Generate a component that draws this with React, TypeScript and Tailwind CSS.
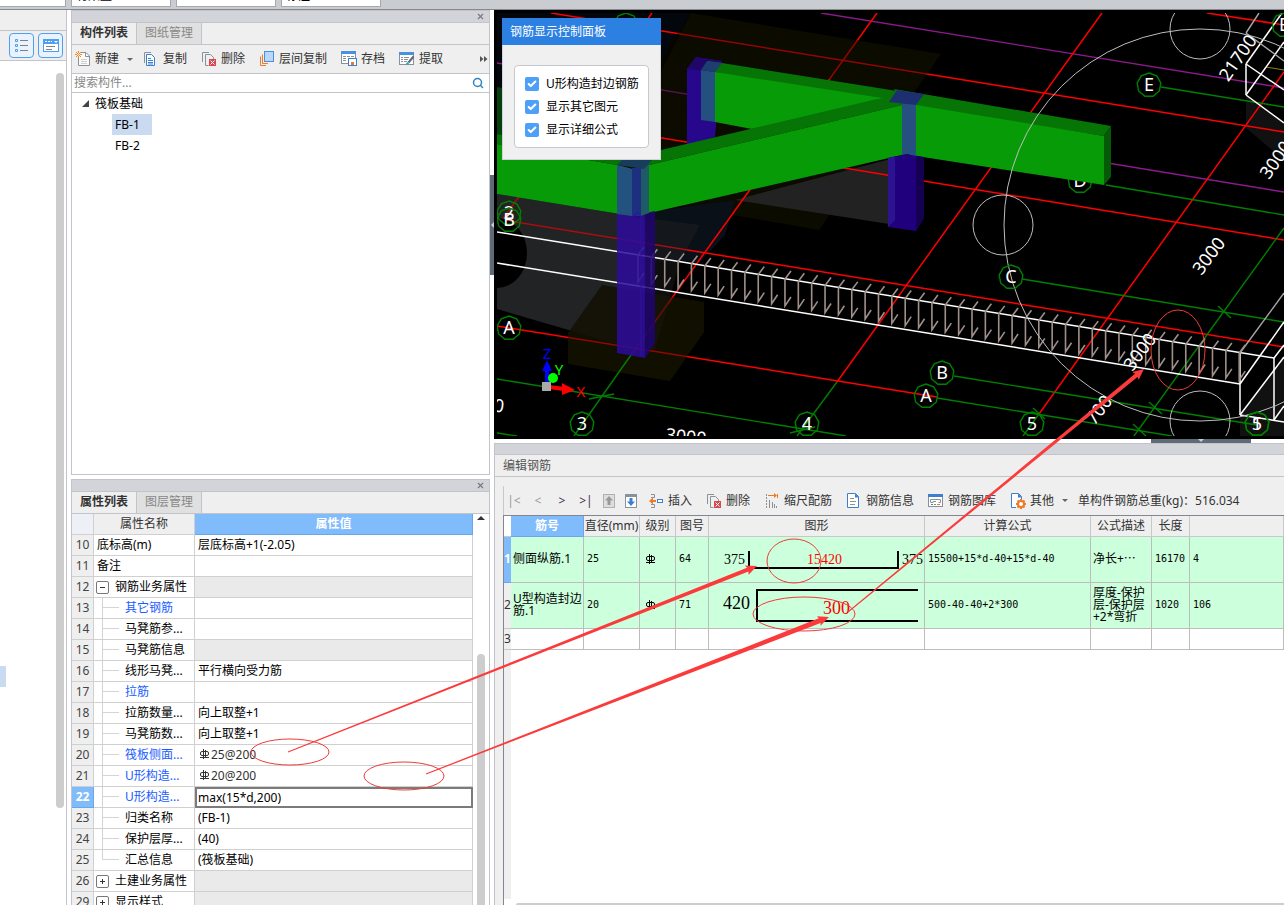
import { useState } from "react"
import type { ReactNode } from "react"
import { Check, Search, X } from "lucide-react"

type Point = [number, number]
type Segment = [number, number, number, number]

// ---------- icons ----------

const Icon = ({ children }: { children: ReactNode }) => (
  <svg width="16" height="16" viewBox="0 0 16 16" fill="none" className="shrink-0" aria-hidden="true">
    {children}
  </svg>
)

const NewIcon = () => (
  <Icon>
    <path d="M5.5 1.5H11l3.5 3.5v9.5h-11V7" fill="#fafafa" stroke="#8a9299" />
    <path d="M10.5 1.5v4h4" stroke="#8a9299" />
    <path d="M6 8.5h6M6 10.5h6M6 12.5h6" stroke="#cfcfcf" />
    <path d="M1 1l5 5M6 1L1 6M3.5 0v2M3.5 5v2M0 3.5h2M5 3.5h2" stroke="#f08a1d" />
  </Icon>
)

const CopyIcon = () => (
  <Icon>
    <path d="M1.5 12V1.5H8" stroke="#8a9299" />
    <path d="M3.5 3.5h5l3 3v8h-8z" fill="#fff" stroke="#3b7fd0" />
    <path d="M5 7.5h3M5 9.5h5M5 11.5h5M5 13h5" stroke="#3b7fd0" />
  </Icon>
)

const DeleteIcon = () => (
  <Icon>
    <path d="M1.5 11V1.5H8" stroke="#8a9299" />
    <path d="M7.5 14.5h-3v-11h5l3 3V8" stroke="#8a9299" />
    <rect x="8" y="8" width="7" height="7" fill="#d9484f" />
    <path d="M9.5 9.5l4 4M13.5 9.5l-4 4" stroke="#fff" />
  </Icon>
)

const LayerIcon = () => (
  <Icon>
    <path d="M1.5 5.5v9H7" stroke="#ee7a28" />
    <path d="M3.5 3.5v9H9" stroke="#ee7a28" />
    <rect x="5.5" y="0.5" width="9" height="10" fill="#b9d7fb" stroke="#4a8fe0" />
  </Icon>
)

const SaveIcon = () => (
  <Icon>
    <rect x="0.5" y="0.5" width="14" height="12" fill="#fff" stroke="#8a9299" />
    <rect x="0" y="0" width="15" height="3" fill="#4a8fe0" />
    <path d="M2 5.5h3M6 5.5h3M10 5.5h3M2 7.5h3M2 9.5h3" stroke="#8a9299" />
    <rect x="7.5" y="7.5" width="8" height="7" fill="#fff" stroke="#3b7fd0" />
    <rect x="10" y="11" width="3" height="3" fill="#ee7a28" />
  </Icon>
)

const ExtractIcon = () => (
  <Icon>
    <rect x="0.5" y="2.5" width="14" height="11" fill="#fff" stroke="#8a9299" />
    <rect x="0" y="1" width="15" height="3" fill="#4a8fe0" />
    <path d="M2 6.5h2M5 6.5h5M2 8.5h2M5 8.5h4M2 10.5h2M5 10.5h3" stroke="#8a9299" />
    <path d="M9.5 11.5l5-6" stroke="#666" strokeWidth="2" />
    <path d="M7.5 13.5l2-2" stroke="#19b6c9" strokeWidth="2" />
  </Icon>
)

const ArrowBoxIcon = ({ up }: { up?: boolean }) => (
  <Icon>
    <rect x="2.5" y="1.5" width="11" height="13" fill={up ? "#dedede" : "#fff"} stroke={up ? "#b0b0b0" : "#8a9299"} />
    {up ? (
      <path d="M8 3l4 4.5H9.5V12h-3V7.5H4z" fill="#999" />
    ) : (
      <>
        <rect x="2" y="1" width="12" height="3" fill="#8a9299" />
        <path d="M8 13l4-4.5H9.5V5h-3v3.5H4z" fill="#3b7fd0" />
      </>
    )}
  </Icon>
)

const InsertIcon = () => (
  <Icon>
    <path d="M3 1.5h3.500v3H3M3 11.5h3.500v3H3" stroke="#8a9299" />
    <path d="M1 8l4-3.500v2.500h3v2H5v2.500z" fill="#ee7a28" />
    <rect x="9.5" y="6.5" width="5" height="3" fill="#fff" stroke="#3b7fd0" />
  </Icon>
)

const ScaleIcon = () => (
  <Icon>
    <path d="M2.5 1v14" stroke="#8a9299" strokeDasharray="2 1" />
    <path d="M5.5 7v8M8.5 9v6M10.5 11v4M12.5 13v2" stroke="#8a9299" />
    <path d="M4 2.5h7M13.5 1v4" stroke="#ee7a28" />
    <path d="M10 0l3 2.5L10 5z" fill="#ee7a28" />
  </Icon>
)

const InfoIcon = () => (
  <Icon>
    <path d="M1.5 0.5h8l3 3v11h-11z" fill="#fff" stroke="#3b7fd0" />
    <path d="M9 0.5v4h4z" fill="#3b7fd0" />
    <path d="M4 5.5h4M4 8.5h6M4 11.5h5" stroke="#8a9299" />
  </Icon>
)

const LibraryIcon = () => (
  <Icon>
    <rect x="0.5" y="1.5" width="14" height="12" fill="#fff" stroke="#8a9299" />
    <rect x="0" y="1" width="15" height="3" fill="#3b7fd0" />
    <path d="M2.5 9.500v-3h10v3h-2M3 9.500h2v-1h3" stroke="#8a9299" />
    <path d="M3 11.5h2" stroke="#3b7fd0" />
    <path d="M6 11.5h2" stroke="#56b24b" />
    <path d="M9 11.5h3" stroke="#ee7a28" />
  </Icon>
)

const OtherIcon = () => (
  <Icon>
    <path d="M6 14.5H1.5V0.5h7l3 3V6" fill="#fff" stroke="#3b7fd0" />
    <path d="M8 0.5v4h4z" fill="#3b7fd0" />
    <circle cx="11" cy="11" r="3" fill="#fff" stroke="#ee7a28" strokeWidth="2" />
    <path d="M11 6v2M11 14v2M6 11h2M14 11h2M7.500 7.500l1 1M13.500 13.500l1 1M14.500 7.500l-1 1M8.500 13.500l-1 1" stroke="#ee7a28" strokeWidth="2" />
  </Icon>
)

const Caret = () => (
  <span className="-mr-1 ml-1 block h-0 w-0 border-x-[3px] border-t-[3px] border-x-transparent border-t-[#666]" />
)

// steel grade mark
const RebarMark = () => (
  <svg width="11" height="11" viewBox="0 0 11 11" fill="none" stroke="currentColor" className="block shrink-0" role="img" aria-label="HRB400">
    <rect x="1.5" y="2.5" width="8" height="4" rx="1.500" />
    <path d="M4.5 0v10M6.5 1v7M1 8.5h9" />
  </svg>
)

// ---------- shared parts ----------

const TitleStrip = () => (
  <div className="flex h-3 shrink-0 items-center justify-end border-b border-[#c3c4c9] bg-[#d3d4da] pr-1">
    <button type="button" aria-label="关闭">
      <X size={9} strokeWidth={3} color="#777" />
    </button>
  </div>
)

const Tabs = ({ names }: { names: string[] }) => (
  <div className="flex h-[22px] shrink-0 border-b border-[#c3c4c9] bg-[#efefef]" role="tablist">
    {names.map((name, i) => (
      <button
        key={name}
        type="button"
        role="tab"
        aria-selected={i === 0}
        className={
          i === 0
            ? "border-r border-[#c3c4c9] px-2 pb-px font-bold text-[#333]"
            : "border-r border-[#c3c4c9] bg-[#e0e0e0] px-2 pb-px text-[#888]"
        }
      >
        {name}
      </button>
    ))}
  </div>
)

const ToolButton = ({ icon, label, caret }: { icon: ReactNode; label: string; caret?: boolean }) => (
  <button type="button" className="flex shrink-0 items-center gap-1 whitespace-nowrap text-[#333]">
    {icon}
    {label}
    {caret && <Caret />}
  </button>
)

// ---------- left side ----------

const Rail = () => (
  <aside className="flex w-[67px] shrink-0 flex-col border-r border-[#c3c4c9]">
    <div className="h-[21px] border-b border-[#c3c4c9] bg-[#efefef]" />
    <div className="flex h-[30px] shrink-0 items-center justify-end gap-1 border-b border-[#c3c4c9] bg-[#efefef] pr-[3px]">
      <button type="button" aria-label="列表" className="flex h-[25px] w-[25px] items-center justify-center rounded border border-[#4d9ff0] bg-[#eaf3fd]">
        <Icon>
          <path d="M1.5 1.5h2v2h-2zM1.5 6.5h2v2h-2zM1.5 11.5h2v2h-2z" stroke="#4d9ff0" />
          <path d="M6 2.5h8M6 7.5h8M6 12.5h8" stroke="#7a8288" />
        </Icon>
      </button>
      <button type="button" aria-label="面板" className="flex h-[25px] w-[25px] items-center justify-center rounded border border-[#4d9ff0] bg-[#eaf3fd]">
        <Icon>
          <rect x="0.5" y="1.5" width="15" height="12" fill="#fff" stroke="#4d9ff0" />
          <rect x="0" y="1" width="16" height="5" fill="#4d9ff0" />
          <path d="M2 3.5h2M5 3.5h2M8 3.5h1" stroke="#fff" />
          <path d="M11 3h4l-2 2z" fill="#fff" />
          <path d="M3 8.5h9M3 11.5h6" stroke="#7a8288" />
        </Icon>
      </button>
    </div>
    <div className="flex flex-1 justify-between pt-3 pr-[2px]">
      <div className="flex flex-col">
        <div className="flex-[593_1_0]" />
        <div className="h-[21px] w-[6px] bg-[#c9daf1]" />
        <div className="flex-[218_1_0]" />
      </div>
      <div className="flex flex-col">
        <div className="w-2 flex-[735_1_0] rounded-full bg-[#cdcdcd]" />
        <div className="flex-[97_1_0]" />
      </div>
    </div>
  </aside>
)

const ComponentPanel = () => {
  const [selected, setSelected] = useState("FB-1")

  return (
    <section className="flex min-h-0 flex-[465_1_0] flex-col border border-[#c3c4c9] bg-white">
      <TitleStrip />
      <Tabs names={["构件列表", "图纸管理"]} />
      <div className="flex h-[29px] shrink-0 items-center gap-[14px] overflow-hidden border-b border-[#c3c4c9] bg-[#efefef] pl-[3px]">
        <ToolButton icon={<NewIcon />} label="新建" caret />
        <ToolButton icon={<CopyIcon />} label="复制" />
        <ToolButton icon={<DeleteIcon />} label="删除" />
        <ToolButton icon={<LayerIcon />} label="层间复制" />
        <ToolButton icon={<SaveIcon />} label="存档" />
        <ToolButton icon={<ExtractIcon />} label="提取" />
        <button type="button" aria-label="更多" className="mr-px ml-auto">
          <svg width="8" height="6" viewBox="0 0 8 6" fill="#555">
            <path d="M0 0l3.500 3L0 6zM4 0l3.500 3L4 6z" />
          </svg>
        </button>
      </div>
      <div className="flex h-[19px] shrink-0 items-center border-b border-[#c3c4c9] pr-[5px]">
        <input
          type="text"
          aria-label="搜索构件"
          placeholder="搜索构件..."
          className="min-w-0 flex-1 pl-[2px] outline-none placeholder:text-[#888]"
        />
        <Search size={12} strokeWidth={3} color="#2a86bd" />
      </div>
      <ul className="leading-[21px] text-black">
        <li>
          <span className="flex items-center gap-[6px] pl-[10px]">
            <svg width="7" height="7" viewBox="0 0 7 7" fill="#444">
              <path d="M7 0v7H0z" />
            </svg>
            筏板基础
          </span>
          <ul className="flex flex-col items-start pl-10">
            {["FB-1", "FB-2"].map((name) => (
              <li key={name}>
                <button
                  type="button"
                  onClick={() => setSelected(name)}
                  className={selected === name ? "w-10 bg-[#c9daf1] pl-[3px] text-left" : "w-10 pl-[3px] text-left"}
                >
                  {name}
                </button>
              </li>
            ))}
          </ul>
        </li>
      </ul>
    </section>
  )
}

type Prop = {
  no: number
  name: string
  value?: string
  child?: "mid" | "last"
  toggle?: "+" | "-"
  blue?: boolean
  grey?: boolean
  mark?: boolean
  active?: boolean
}

const props: Prop[] = [
  { no: 10, name: "底标高(m)", value: "层底标高+1(-2.05)" },
  { no: 11, name: "备注" },
  { no: 12, name: "钢筋业务属性", toggle: "-", grey: true },
  { no: 13, name: "其它钢筋", child: "mid", blue: true },
  { no: 14, name: "马凳筋参...", child: "mid" },
  { no: 15, name: "马凳筋信息", child: "mid", grey: true },
  { no: 16, name: "线形马凳...", value: "平行横向受力筋", child: "mid" },
  { no: 17, name: "拉筋", child: "mid", blue: true },
  { no: 18, name: "拉筋数量...", value: "向上取整+1", child: "mid" },
  { no: 19, name: "马凳筋数...", value: "向上取整+1", child: "mid" },
  { no: 20, name: "筏板侧面...", value: "25@200", child: "mid", blue: true, mark: true },
  { no: 21, name: "U形构造...", value: "20@200", child: "mid", blue: true, mark: true },
  { no: 22, name: "U形构造...", value: "max(15*d,200)", child: "mid", blue: true, active: true },
  { no: 23, name: "归类名称", value: "(FB-1)", child: "mid" },
  { no: 24, name: "保护层厚...", value: "(40)", child: "mid" },
  { no: 25, name: "汇总信息", value: "(筏板基础)", child: "last" },
  { no: 26, name: "土建业务属性", toggle: "+", grey: true },
  { no: 29, name: "显示样式", toggle: "+", grey: true },
]

const PropertyName = ({ row }: { row: Prop }) => (
  <div className="flex h-5 items-center overflow-hidden whitespace-nowrap">
    {row.child && (
      <span className={row.child === "mid" ? "mr-[6px] ml-2 h-5 w-[17px] border-l border-[#d4d4d4]" : "mr-[6px] ml-2 h-5 w-[17px]"}>
        <span className={row.child === "mid" ? "block h-[10px] border-b border-[#d4d4d4]" : "block h-[10px] border-b border-l border-[#d4d4d4]"} />
      </span>
    )}
    {row.toggle && (
      <button
        type="button"
        aria-label={row.toggle === "+" ? "展开" : "折叠"}
        className="mr-[6px] ml-[2px] flex h-[13px] w-[13px] items-center justify-center rounded-[2px] border border-[#777]"
      >
        <svg width="5" height="5" viewBox="0 0 5 5" stroke="#333">
          <path d={row.toggle === "+" ? "M0 2.5h5M2.5 0v5" : "M0 2.5h5"} />
        </svg>
      </button>
    )}
    <span className={row.blue ? "text-[#1a5cff]" : "text-black"}>
      {!row.child && !row.toggle ? <span className="pl-[3px]">{row.name}</span> : row.name}
    </span>
  </div>
)

const PropertyPanel = () => (
  <section className="flex min-h-0 flex-[426_1_0] flex-col overflow-hidden border border-b-0 border-[#c3c4c9] bg-white">
    <TitleStrip />
    <Tabs names={["属性列表", "图层管理"]} />
    <div className="flex min-h-0 flex-1">
      <div className="min-w-0 flex-1 overflow-hidden">
        <table className="w-full table-fixed border-separate border-spacing-0">
          <colgroup>
            <col className="w-[22px]" />
            <col className="w-[101px]" />
            <col />
          </colgroup>
          <thead>
            <tr className="h-[21px] bg-[#efefef] text-[#333]">
              <th className="border-r border-b border-[#d0d0d0] bg-[#edf1f7] p-0" aria-label="序号" />
              <th className="border-r border-b border-[#d0d0d0] p-0 font-normal">属性名称</th>
              <th className="border-r border-b border-[#69a7ec] bg-[#80bbfb] p-0 font-bold text-white">属性值</th>
            </tr>
          </thead>
          <tbody>
            {props.map((row) => (
              <tr key={row.no} className="h-[21px]">
                <td
                  className={
                    row.active
                      ? "border-r border-b border-[#69a7ec] bg-[#80bbfb] p-0 text-center font-bold text-white"
                      : "border-r border-b border-[#d0d0d0] bg-[#efefef] p-0 text-center text-[#444]"
                  }
                >
                  {row.no}
                </td>
                <td className="border-r border-b border-[#d0d0d0] p-0">
                  <PropertyName row={row} />
                </td>
                {row.active ? (
                  <td className="p-0">
                    <input
                      type="text"
                      aria-label={row.name}
                      defaultValue={row.value}
                      className="block h-[21px] w-full border-2 border-[#7b7b7b] pb-px pl-px text-black outline-none"
                    />
                  </td>
                ) : (
                  <td
                    className={
                      row.grey
                        ? "border-r border-b border-[#d0d0d0] bg-[#eaeaea] p-0"
                        : "border-r border-b border-[#d0d0d0] p-0 pl-[3px] text-black"
                    }
                  >
                    {row.mark ? (
                      <span className="flex items-center gap-px pb-px pl-px text-[#333]">
                        <RebarMark />
                        {row.value}
                      </span>
                    ) : (
                      row.value
                    )}
                  </td>
                )}
              </tr>
            ))}
          </tbody>
        </table>
      </div>
      <div className="flex w-4 flex-col items-center pt-[2px]">
        <span className="h-0 w-0 border-x-4 border-b-4 border-x-transparent border-b-[#333]" />
        <div className="flex-[134_1_0]" />
        <div className="w-2 flex-[252_1_0] rounded-t-full bg-[#cdcdcd]" />
      </div>
    </div>
  </section>
)

// ---------- 3D view ----------

const redLines: Segment[] = [
  [551, 13, 1284, 132],
  [497, 111, 1284, 240],
  [497, 219, 1284, 347],
  [497, 326, 937, 397],
  [1207, 13, 1284, 25],
  [652, 13, 497, 227],
  [877, 13, 631, 355],
  [1102, 13, 837, 382],
  [1284, 72, 1039, 414],
]

const greenLines: Segment[] = [
  [1161, 87, 1284, 107],
  [1106, 185, 1284, 215],
  [1022, 279, 1284, 322],
  [954, 376, 1257, 425],
  [937, 398, 1172, 436],
  [497, 379, 846, 436],
  [497, 433, 517, 436],
  [631, 355, 574, 436],
  [837, 382, 797, 436],
  [1284, 228, 1134, 436],
  [1039, 414, 1023, 436],
  [589, 399, 614, 394],
  [790, 433, 815, 427],
  [1218, 306, 1231, 318],
  [1149, 402, 1162, 414],
  [1133, 424, 1146, 436],
  [1033, 408, 1045, 419],
]

const magentaLines: Segment[] = [
  [821, 13, 1284, 88],
  [497, 63, 1284, 192],
]

const whiteLines: Segment[] = [
  [497, 232, 1274, 358],
  [497, 263, 1240, 384],
  [1246, 64, 1284, 90],
  [1246, 95, 1284, 123],
  [1246, 64, 1246, 95],
  [1246, 64, 1282, 13],
  [1246, 95, 1284, 42],
  [1240, 353, 1240, 415],
  [1240, 415, 1284, 422],
  [1274, 358, 1274, 420],
  [1274, 358, 1284, 345],
  [1240, 384, 1284, 322],
  [1240, 415, 1284, 357],
  [1274, 420, 1284, 406],
]

const greyLines: Segment[] = [
  [1259, 13, 1246, 33],
  [1246, 33, 1284, 61],
  [1240, 353, 1284, 293],
]

const bubbles: { x: number; y: number; text: string }[] = [
  { x: 626, y: 25, text: "" },
  { x: 1149, y: 85, text: "E" },
  { x: 1284, y: 25, text: "E" },
  { x: 1011, y: 277, text: "C" },
  { x: 942, y: 373, text: "B" },
  { x: 926, y: 396, text: "A" },
  { x: 1032, y: 424, text: "5" },
  { x: 807, y: 424, text: "4" },
  { x: 582, y: 424, text: "3" },
  { x: 509, y: 328, text: "A" },
  { x: 509, y: 213, text: "2" },
  { x: 509, y: 220, text: "B" },
  { x: 1257, y: 424, text: "1" },
  { x: 1257, y: 424, text: "5" },
]

const dimensions = [
  { x: 1238, y: 58, text: "21700", angle: -55 },
  { x: 1276, y: 160, text: "3000", angle: -55 },
  { x: 1209, y: 256, text: "3000", angle: -53 },
  { x: 1140, y: 352, text: "3000", angle: -53 },
  { x: 1099, y: 410, text: "700", angle: -53 },
  { x: 686, y: 437, text: "3000", angle: 6 },
  { x: 499, y: 406, text: "0", angle: 8 },
]

const Lines = ({ items, color, width = 1 }: { items: Segment[]; color: string; width?: number }) => (
  <g stroke={color} strokeWidth={width}>
    {items.map(([x1, y1, x2, y2], i) => (
      <line key={i} x1={x1} y1={y1} x2={x2} y2={y2} />
    ))}
  </g>
)

const Bubble = ({ x, y, text }: { x: number; y: number; text: string }) => {
  const ring = Array.from({ length: 9 }, (_, i) => {
    const a = (i * 2 * Math.PI) / 9 - Math.PI / 2
    return `${x + 12 * Math.cos(a)},${y + 12 * Math.sin(a)}`
  }).join(" ")

  return (
    <g>
      <polygon points={ring} fill="none" stroke="#008000" strokeWidth="1.4" />
      <text x={x} y={y + 6} fill="#fff" fontSize="18" textAnchor="middle">
        {text}
      </text>
    </g>
  )
}

const stirrups = Array.from({ length: 46 }, (_, i) => ({ x: 638 + i * 13.36, y: 255 + i * 2.18 }))

const Scene = () => (
  <svg viewBox="494 10 790 429" preserveAspectRatio="xMinYMin slice" className="h-full w-full" role="img" aria-label="三维视图">
    <defs>
      <clipPath id="viewport">
        <rect x="497" y="13" width="787" height="423" />
      </clipPath>
    </defs>
    <rect x="494" y="10" width="790" height="429" fill="#000" />
    <g clipPath="url(#viewport)" fontFamily="'Noto Sans', 'Noto Sans CJK SC', sans-serif">
      <polygon points="497,13 691,13 560,215 725,225 700,262 640,262 497,240" fill="#03060c" />
      <polygon points="691,13 941,54 819,230 600,192" fill="#0c0b00" />
      <polygon points="497,194 632,216 655,225 655,350 620,345 497,309" fill="#222325" />
      <polygon points="640,213 735,200 725,235 700,262 655,258" fill="#0a1017" />
      <polygon points="735,200 894,158 889,224" fill="#222" />
      <polygon points="602,285 704,302 704,332 670,381 568,364 568,333" fill="#111000" />
      <polygon points="1246,95 1284,123 1284,160 1246,128" fill="#111" />
      <polygon points="1240,415 1284,357 1284,436 1240,436" fill="#111" />

      <Lines items={magentaLines} color="#8d1a8d" width={1.4} />
      <Lines items={redLines} color="#ff0000" width={1.5} />
      <polygon points="691,13 941,54 914,92 722,63 661,137 597,150" fill="#0c0b00" opacity="0.45" />
      <polygon points="497,194 632,216 700,225 680,262 655,350 620,345 497,309" fill="#222325" opacity="0.4" />
      <polygon points="602,285 704,302 704,332 670,381 568,364 568,333" fill="#111000" opacity="0.45" />
      <Lines items={greenLines} color="#008000" width={1.4} />
      <Lines items={[[1266, 67, 1284, 70]]} color="#8a8412" />
      <Bubble x={1080} y={181} text="D" />

      {/* bars along the slab edge */}
      <ellipse cx="497" cy="253" rx="30" ry="35" fill="#000" />
      <Lines items={whiteLines} color="#fff" width={1.5} />
      <Lines items={greyLines} color="#a8a8a8" width={1.4} />
      <g fill="none" stroke="#a0908a" strokeWidth="1.6">
        {stirrups.map(({ x, y }) => (
          <path key={x} d={`M${x + 6} ${y - 8}L${x} ${y}V${y + 27}L${x + 6} ${y + 18}`} />
        ))}
      </g>

      {/* rear column */}
      <polygon points="687,69 696,57 722,61 715,137 687,146" fill="#27088c" />
      <polygon points="687,69 696,57 722,61 715,72" fill="#200668" />

      {/* beams */}
      <polygon points="707,61 722,63 897,91 902,105 870,105 715,72" fill="#067506" />
      <polygon points="715,72 882,98 860,106 752,129 715,122" fill="#089b08" />
      <polygon points="701,70 715,72 715,122 701,120" fill="#23507f" />
      <polygon points="707,61 722,63 715,72 701,70" fill="#1d3f70" />
      <polygon points="894,89 1111,126 1104,136 902,105" fill="#067506" />
      <polygon points="910,104 1104,136 1104,185 910,155" fill="#089b08" />
      <polygon points="1111,126 1111,177 1104,185 1104,136" fill="#055a05" />
      <polygon points="497,87 600,105 600,150 497,134" fill="#07400f" />
      <polygon points="497,134 597,150 661,150 877,99 902,105 649,165 617,165 497,144" fill="#067506" />
      <polygon points="497,144 617,165 632,169 632,216 497,194" fill="#089b08" />
      <polygon points="645,166 902,105 902,155 645,214" fill="#089b08" />

      {/* middle column */}
      <polygon points="888,158 907,154 924,157 924,218 916,231 888,227" fill="#20007c" />
      <polygon points="888,158 895,156 895,220 888,227" fill="#2c1490" />
      <polygon points="916,157 924,157 924,218 916,231" fill="#160052" />
      <polygon points="902,103 916,105 916,156 907,154 902,155" fill="#255080" />
      <polygon points="889,102 897,90 924,94 916,105" fill="#1d2f70" />

      {/* front column */}
      <polygon points="617,213 636,211 645,214 645,358 617,353" fill="#2d0c9c" opacity="0.85" />
      <polygon points="645,213 655,211 655,343 645,358" fill="#1e0570" opacity="0.85" />
      <polygon points="617,165 632,169 632,216 617,214" fill="#24527f" />
      <polygon points="632,168 641,168 641,216 632,216" fill="#1c2f80" />
      <polygon points="641,168 649,165 649,213 641,216" fill="#1f5a66" />
      <polygon points="617,165 622,160 652,160 644,169" fill="#183c5c" />
      <path d="M633 218l4-6 4 4v140" fill="none" stroke="#2f10a0" />

      <g fill="none" stroke="#bdbdbd" strokeWidth="1">
        <circle cx="1200" cy="225" r="196" />
        <circle cx="1003" cy="225" r="30" />
        <circle cx="1200" cy="29" r="30" />
        <circle cx="1200" cy="421" r="30" />
      </g>

      {bubbles.map((b, i) => (
        <Bubble key={i} {...b} />
      ))}
      {dimensions.map((d, i) => (
        <text key={i} x={d.x} y={d.y + 6} fill="#fff" fontSize="18" textAnchor="middle" transform={`rotate(${d.angle} ${d.x} ${d.y})`}>
          {d.text}
        </text>
      ))}

      {/* axes */}
      <path d="M547 384v-16" stroke="#00f" strokeWidth="4" />
      <polygon points="542,371 547,360 552,371" fill="#00f" />
      <circle cx="553" cy="378" r="5" fill="#0f0" />
      <path d="M549 387l15 2" stroke="#f00" strokeWidth="4" />
      <polygon points="562,383 575,390 562,395" fill="#f00" />
      <rect x="542" y="382" width="9" height="9" fill="#aaa" />
      <g fontSize="15" textAnchor="middle">
        <text x="547" y="359" fill="#00f">Z</text>
        <text x="559" y="375" fill="#0f0">Y</text>
        <text x="581" y="397" fill="#f00">X</text>
      </g>
    </g>
  </svg>
)

const DisplayPanel = () => (
  <div className="absolute top-2 left-2 border border-[#cfd3da] bg-[#f0f0f0]">
    <h2 className="-mx-px -mt-px bg-[#2b80e2] px-2 leading-[27px] text-white">钢筋显示控制面板</h2>
    <div className="px-[11px] pt-5 pb-[11px]">
      <div className="flex flex-col gap-[5px] rounded border border-[#c6c9cd] bg-white pt-[9px] pr-[9px] pb-2 pl-[10px]">
        {["U形构造封边钢筋", "显示其它图元", "显示详细公式"].map((label) => (
          <label key={label} className="flex items-center gap-[7px] leading-[18px] text-black">
            <span className="grid">
              <input type="checkbox" defaultChecked className="col-start-1 row-start-1 h-[14px] w-[14px] appearance-none rounded-[2px] bg-[#4d9ff8]" />
              <Check size={10} strokeWidth={5} color="#fff" className="pointer-events-none col-start-1 row-start-1 place-self-center" />
            </span>
            {label}
          </label>
        ))}
      </div>
    </div>
  </div>
)

// ---------- rebar editor ----------

const Shape = ({ u }: { u?: boolean }) => (
  <svg width="215" height="45" viewBox="0 0 215 45" fill="none" className="block" fontFamily="'Liberation Serif', serif">
    {u ? (
      <>
        <path d="M209 7H48v31h161" stroke="#000" strokeWidth="2" />
        <text x="14" y="26" fontSize="18" fill="#000">420</text>
        <text x="114" y="31" fontSize="18" fill="#f00">300</text>
      </>
    ) : (
      <>
        <path d="M40 14v17h149V14" stroke="#000" strokeWidth="2" />
        <text x="15" y="27" fontSize="14" fill="#000">375</text>
        <text x="98" y="27" fontSize="14" fill="#f00">15420</text>
        <text x="193" y="27" fontSize="14" fill="#000">375</text>
      </>
    )}
  </svg>
)

const NavButton = ({ label, title, dim }: { label: string; title: string; dim?: boolean }) => (
  <button type="button" aria-label={title} className={dim ? "w-6 text-center text-[#999]" : "w-6 text-center text-[#4a2a4a]"}>
    {label}
  </button>
)

const headers = ["直径(mm)", "级别", "图号", "图形", "计算公式", "公式描述", "长度", ""]

const bars = [
  { no: 1, name: "侧面纵筋.1", size: 25, fig: 64, formula: "15500+15*d-40+15*d-40", desc: "净长+⋯", length: 16170, count: 4 },
  { no: 2, name: "U型构造封边筋.1", size: 20, fig: 71, formula: "500-40-40+2*300", desc: "厚度-保护层-保护层+2*弯折", length: 1020, count: 106 },
]

const cell = "border-r border-b border-[#bdbdbd] p-0 pl-[2px]"
const monoCell = "border-r border-b border-[#bdbdbd] p-0 pl-[3px] font-['DejaVu_Sans_Mono',monospace] text-[10px] whitespace-nowrap"

const RebarEditor = () => (
  <section className="flex min-h-0 flex-[462_1_0] flex-col overflow-hidden border-t border-l border-[#c3c4c9] bg-[#efefef]">
    <div className="h-[11px] shrink-0 border-b border-[#c3c4c9] bg-[#d3d4da]" />
    <h2 className="h-[22px] shrink-0 border-b border-[#c3c4c9] pl-2 leading-[21px] text-[#555]">编辑钢筋</h2>
    <div className="flex min-h-0 flex-1 flex-col pt-[9px] pl-2">
      <div className="flex h-[29px] shrink-0 items-center gap-[14px] overflow-hidden border-l border-[#c8c8c8] pt-px text-[#333]">
        <div className="-mr-2 -ml-[2px] flex shrink-0 items-center">
          <NavButton label="|<" title="第一条" dim />
          <NavButton label="<" title="上一条" dim />
          <NavButton label=">" title="下一条" />
          <NavButton label=">|" title="最后一条" />
          <button type="button" aria-label="上移" className="flex w-[22px] justify-center">
            <ArrowBoxIcon up />
          </button>
          <button type="button" aria-label="下移" className="flex w-[22px] justify-center">
            <ArrowBoxIcon />
          </button>
        </div>
        <ToolButton icon={<InsertIcon />} label="插入" />
        <ToolButton icon={<DeleteIcon />} label="删除" />
        <ToolButton icon={<ScaleIcon />} label="缩尺配筋" />
        <ToolButton icon={<InfoIcon />} label="钢筋信息" />
        <ToolButton icon={<LibraryIcon />} label="钢筋图库" />
        <ToolButton icon={<OtherIcon />} label="其他" caret />
        <span className="whitespace-nowrap">单构件钢筋总重(kg)：516.034</span>
      </div>
      <div className="flex min-h-0 flex-1 flex-col border-t border-l border-[#85858f] bg-white">
        <table className="w-full table-fixed border-separate border-spacing-0 text-black">
          <colgroup>
            <col className="w-[7px]" />
            <col className="w-[73px]" />
            <col className="w-[56px]" />
            <col className="w-[36px]" />
            <col className="w-[33px]" />
            <col className="w-[216px]" />
            <col className="w-[166px]" />
            <col className="w-[61px]" />
            <col className="w-[38px]" />
            <col />
          </colgroup>
          <thead>
            <tr className="h-[21px] bg-[#efefef] text-[#333]">
              <th className="border-b border-[#c8c8c8] bg-white p-0" aria-label="序号" />
              <th className="border-r border-b border-[#69a7ec] bg-[#80bbfb] p-0 font-bold text-white">筋号</th>
              {headers.map((h) => (
                <th key={h} className="border-r border-b border-[#c8c8c8] p-0 font-normal whitespace-nowrap">
                  {h}
                </th>
              ))}
            </tr>
          </thead>
          <tbody>
            {bars.map((bar) => (
              <tr key={bar.no} className="h-[46px] bg-[#ccffdc]">
                <td
                  className={
                    bar.no === 1
                      ? "border-b border-[#69a7ec] bg-[#80bbfb] p-0 font-bold text-white"
                      : "border-b border-[#c8c8c8] bg-[#efefef] p-0 text-[#333]"
                  }
                >
                  {bar.no}
                </td>
                <td className={cell}>
                  <div className="leading-3 break-all">{bar.name}</div>
                </td>
                <td className={monoCell}>{bar.size}</td>
                <td className="border-r border-b border-[#bdbdbd] p-0 pl-[5px]">
                  <RebarMark />
                </td>
                <td className={monoCell}>{bar.fig}</td>
                <td className="border-r border-b border-[#bdbdbd] p-0">
                  <Shape u={bar.no === 2} />
                </td>
                <td className={monoCell}>{bar.formula}</td>
                <td className={cell}>
                  <div className="leading-3 break-all">{bar.desc}</div>
                </td>
                <td className={monoCell}>{bar.length}</td>
                <td className={monoCell}>{bar.count}</td>
              </tr>
            ))}
            <tr className="h-[21px]">
              <td className="border-b border-[#c8c8c8] bg-[#efefef] p-0 text-[#333]">3</td>
              {["筋号", ...headers].map((h) => (
                <td key={h} className="border-r border-b border-[#bdbdbd] p-0" />
              ))}
            </tr>
          </tbody>
        </table>
        <div className="w-[7px] flex-1 bg-[#efefef]" />
        <div className="flex h-[6px] items-end pl-3">
          <div className="h-[2px] flex-1 rounded-tl bg-[#cdcdcd]" />
        </div>
      </div>
    </div>
  </section>
)

// ---------- red markup ----------

const arrows: { from: Point; to: Point; start: number; end: number }[] = [
  { from: [288, 752], to: [757, 566], start: 1, end: 4 },
  { from: [426, 774], to: [829, 617], start: 1, end: 5 },
  { from: [848, 612], to: [1144, 369], start: 1, end: 4 },
]

const arrowPoints = ({ from, to, start, end }: (typeof arrows)[number]) => {
  const [x1, y1] = from
  const [x2, y2] = to
  const len = Math.hypot(x2 - x1, y2 - y1)
  const ux = (x2 - x1) / len
  const uy = (y2 - y1) / len
  const at = (along: number, side: number) => `${x1 + ux * along - uy * side},${y1 + uy * along + ux * side}`
  const neck = len - 10
  return [at(0, start / 2), at(neck, end / 2), at(neck - 1, 5), at(len, 0), at(neck - 1, -5), at(neck, -end / 2), at(0, -start / 2)].join(" ")
}

const Markup = () => (
  <svg className="pointer-events-none absolute inset-0 h-full w-full" fill="none" stroke="#f03a3a" aria-hidden="true">
    <ellipse cx="290" cy="752" rx="39" ry="13" />
    <ellipse cx="404" cy="776" rx="40" ry="14" />
    <ellipse cx="794" cy="561" rx="27" ry="22" />
    <ellipse cx="804" cy="614" rx="51" ry="17" />
    <ellipse cx="1178" cy="350" rx="27" ry="40" />
    {arrows.map((a, i) => (
      <polygon key={i} points={arrowPoints(a)} fill="#fb3b3b" stroke="none" />
    ))}
  </svg>
)

export default function App() {
  return (
    <div className="relative flex h-screen flex-col overflow-hidden bg-white font-['Noto_Sans','Noto_Sans_CJK_SC',sans-serif] text-xs">
      <header className="flex h-[10px] shrink-0 items-end gap-[5px] overflow-hidden border-b border-[#85888d] bg-[#c9ccd1] pb-[2px]">
        <div className="h-6 w-[66px] border border-l-0 border-[#a5a8ad] bg-white" />
        {["有梁型", "", "标注"].map((text, i) => (
          <input
            key={i}
            type="text"
            aria-label="楼层构件"
            defaultValue={text}
            className="h-6 w-[100px] shrink-0 border border-[#a5a8ad] bg-white pl-1 text-black"
          />
        ))}
      </header>

      <div className="flex min-h-0 flex-1">
        <Rail />
        <div className="ml-1 flex w-[419px] shrink-0 flex-col gap-1">
          <ComponentPanel />
          <PropertyPanel />
        </div>
        <div className="flex w-1 shrink-0 flex-col">
          <div className="flex-[165_1_0]" />
          <button type="button" aria-label="收起左侧" className="flex h-[100px] items-center justify-end bg-[#5f6b78]">
            <span className="h-0 w-0 border-y-[3px] border-r-[3px] border-y-transparent border-r-[#c9ccd1]" />
          </button>
          <div className="flex-[630_1_0]" />
        </div>
        <main className="flex min-w-0 flex-1 flex-col">
          <div className="relative min-h-0 flex-[429_1_0] overflow-hidden bg-black">
            <Scene />
            <DisplayPanel />
          </div>
          <div className="flex h-1 shrink-0 justify-end pr-[33px]">
            <button type="button" aria-label="收起下方" className="flex w-[100px] justify-center bg-[#5f6b78]">
              <span className="h-0 w-0 border-x-[3px] border-t-[3px] border-x-transparent border-t-[#c9ccd1]" />
            </button>
          </div>
          <RebarEditor />
        </main>
      </div>

      <Markup />
    </div>
  )
}
